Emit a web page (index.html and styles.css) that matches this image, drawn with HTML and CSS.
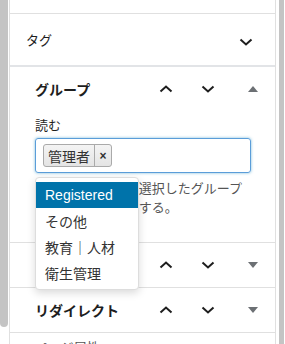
FILE: index.html
```html
<!DOCTYPE html>
<html lang="ja">
<head>
    <meta charset="UTF-8">
    <title>投稿設定</title>
    <link rel="stylesheet" href="styles.css">
</head>
<body>
    <div class="scroll-left"></div>

    <div class="sidebar">
        <div class="panel-top"></div>

        <div class="panel tags">
            <span class="panel-title">タグ</span>
            <svg class="chev" width="14" height="8" viewBox="0 0 14 8"><polyline points="1.5,1.5 7,6.5 12.5,1.5"/></svg>
        </div>

        <div class="metabox open">
            <div class="metabox-head">
                <h3>グループ</h3>
                <button class="move-btn"><svg width="14" height="8" viewBox="0 0 14 8"><polyline points="1.5,6.5 7,1.5 12.5,6.5"/></svg></button>
                <button class="move-btn"><svg width="14" height="8" viewBox="0 0 14 8"><polyline points="1.5,1.5 7,6.5 12.5,1.5"/></svg></button>
                <button class="toggle-btn"><span class="tri up"></span></button>
            </div>
            <div class="metabox-body">
                <label class="field-label">読む</label>
                <div class="select-wrap">
                    <div class="select-box">
                        <span class="chip"><span class="chip-text">管理者</span><span class="chip-x">×</span></span>
                    </div>
                    <ul class="dropdown">
                        <li class="active">Registered</li>
                        <li>その他</li>
                        <li>教育｜人材</li>
                        <li>衛生管理</li>
                    </ul>
                </div>
                <p class="desc">閲覧できるのは、選択したグループ<br>のユーザーに限定する。</p>
            </div>
        </div>

        <div class="metabox">
            <div class="metabox-head">
                <h3>カテゴリー</h3>
                <button class="move-btn"><svg width="14" height="8" viewBox="0 0 14 8"><polyline points="1.5,6.5 7,1.5 12.5,6.5"/></svg></button>
                <button class="move-btn"><svg width="14" height="8" viewBox="0 0 14 8"><polyline points="1.5,1.5 7,6.5 12.5,1.5"/></svg></button>
                <button class="toggle-btn"><span class="tri"></span></button>
            </div>
        </div>

        <div class="metabox">
            <div class="metabox-head">
                <h3>リダイレクト</h3>
                <button class="move-btn"><svg width="14" height="8" viewBox="0 0 14 8"><polyline points="1.5,6.5 7,1.5 12.5,6.5"/></svg></button>
                <button class="move-btn"><svg width="14" height="8" viewBox="0 0 14 8"><polyline points="1.5,1.5 7,6.5 12.5,1.5"/></svg></button>
                <button class="toggle-btn"><span class="tri"></span></button>
            </div>
        </div>

        <div class="next-row">ページ属性</div>
    </div>

    <div class="scroll-right"></div>
</body>
</html>
```

FILE: styles.css
```css
html, body {
    margin: 0;
    padding: 0;
    height: 344px;
    overflow: hidden;
    background: #fff;
}

body {
    display: flex;
    font-family: "Liberation Sans", "Noto Sans CJK JP", sans-serif;
    color: #1e1e1e;
}

.scroll-left {
    width: 8px;
    height: 327px;
    background: #c4c4c4;
    border-radius: 0 0 4px 4px;
    flex-shrink: 0;
}

.sidebar {
    width: 265px;
    margin-left: 1px;
    border-left: 1px solid #e0e0e0;
    border-right: 1px solid #e0e0e0;
    flex-shrink: 0;
}

.scroll-right {
    width: 5px;
    margin-left: 3px;
    background: #c4c4c4;
    flex-shrink: 0;
}

.panel-top {
    height: 13px;
    border-bottom: 1px solid #e0e0e0;
}

.panel {
    display: flex;
    align-items: center;
    height: 51px;
    padding: 0 22px 0 16px;
    border-bottom: 2px solid #e2e4e7;
}

.panel-title {
    flex: 1;
    font-size: 13px;
    font-family: "Noto Sans CJK JP", sans-serif;
    color: #1e1e1e;
}

.chev polyline,
.move-btn polyline {
    fill: none;
    stroke: #1e1e1e;
    stroke-width: 2;
}

.chev {
    margin-top: 5px;
}

.metabox {
    border-bottom: 1px solid #e0e0e0;
}

.metabox-head {
    display: flex;
    align-items: center;
    height: 44px;
    padding: 0 4px 0 25px;
}

.metabox-head h3 {
    flex: 1;
    margin: 0;
    font-size: 14px;
    font-weight: bold;
    font-family: "Noto Sans CJK JP", sans-serif;
    color: #1e1e1e;
}

.move-btn,
.toggle-btn {
    display: flex;
    align-items: center;
    justify-content: center;
    height: 36px;
    padding: 0;
    border: none;
    background: none;
}

.move-btn {
    width: 42px;
}

.toggle-btn {
    width: 36px;
    margin-left: 6px;
}

.tri {
    width: 0;
    height: 0;
    border-left: 5px solid transparent;
    border-right: 5px solid transparent;
    border-top: 6px solid #6c7074;
}

.tri.up {
    border-top: none;
    border-bottom: 6px solid #6c7074;
}

.metabox-body {
    padding: 5px 24px 26px 25px;
}

.field-label {
    display: block;
    font-size: 13px;
    font-family: "Noto Sans CJK JP", sans-serif;
    line-height: 18px;
    color: #1e1e1e;
    margin-bottom: 4px;
}

.select-wrap {
    position: relative;
}

.select-box {
    height: 33px;
    border: 1px solid #5b9dd9;
    border-radius: 3px;
    box-shadow: 0 0 3px rgba(30, 140, 190, 0.6);
    padding: 5px 7px;
    box-sizing: border-box;
    height: 35px;
}

.chip {
    display: inline-flex;
    align-items: stretch;
    height: 23px;
    border: 1px solid #aaa;
    border-radius: 3px;
    background: linear-gradient(#f4f4f4, #e4e4e4);
    box-sizing: border-box;
}

.chip-text {
    display: flex;
    align-items: center;
    padding: 0 4px;
    font-size: 14px;
    font-family: "Noto Sans CJK JP", sans-serif;
    color: #333;
    border-right: 1px solid #aaa;
}

.chip-x {
    display: flex;
    align-items: center;
    justify-content: center;
    width: 16px;
    font-size: 12px;
    font-weight: bold;
    color: #333;
}

.dropdown {
    position: absolute;
    top: 39px;
    left: 0;
    width: 104px;
    margin: 0;
    padding: 4px 0 3px;
    list-style: none;
    background: #fff;
    border: 1px solid #ddd;
    border-radius: 4px;
    box-shadow: 0 3px 8px rgba(0, 0, 0, 0.15);
    box-sizing: border-box;
    z-index: 5;
}

.dropdown li {
    height: 26px;
    line-height: 26px;
    padding-left: 9px;
    font-size: 14px;
    font-family: "Noto Sans CJK JP", sans-serif;
    color: #333;
}

.dropdown li.active {
    background: #0073aa;
    color: #fff;
    font-family: "Liberation Sans", sans-serif;
}

.desc {
    margin: 5px 0 0;
    font-size: 13px;
    line-height: 19px;
    font-family: "Noto Sans CJK JP", sans-serif;
    color: #555;
    white-space: nowrap;
}

.next-row {
    padding: 4px 25px;
    font-size: 13px;
    font-family: "Noto Sans CJK JP", sans-serif;
    color: #555;
}
```
